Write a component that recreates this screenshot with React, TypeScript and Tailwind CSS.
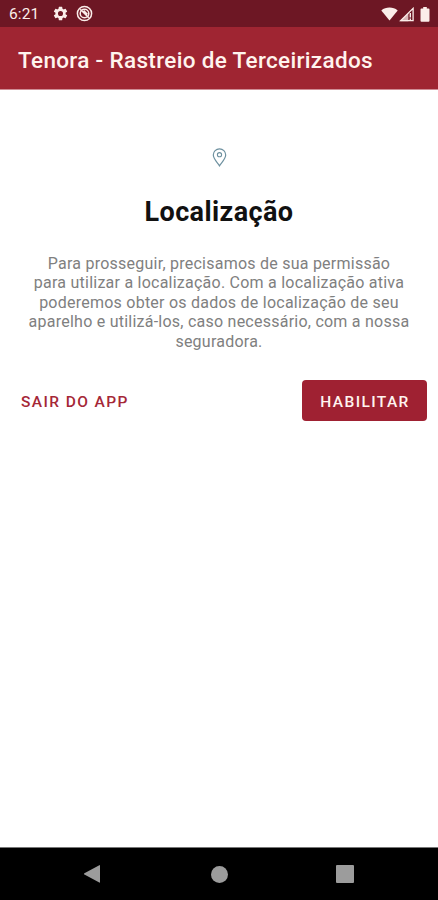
function StatusBar() {
  return (
    <div className="flex h-[27px] shrink-0 items-center bg-[#6d1724] pl-[9px] pr-[8px] text-[#fbeeea]">
      <span className="w-[43px] pt-[2px] text-[15.5px] leading-[27px] tracking-[0.1px]">6:21</span>
      <svg className="h-[17px] w-[17px]" viewBox="0 0 24 24" fill="currentColor">
        <path d="M19.14 12.94c.04-.3.06-.61.06-.94 0-.32-.02-.64-.07-.94l2.03-1.58a.49.49 0 0 0 .12-.61l-1.92-3.32a.49.49 0 0 0-.59-.22l-2.39.96a7 7 0 0 0-1.62-.94l-.36-2.54a.48.48 0 0 0-.48-.41h-3.84a.48.48 0 0 0-.47.41l-.36 2.54c-.59.24-1.13.57-1.62.94l-2.39-.96a.48.48 0 0 0-.59.22L2.74 8.87a.48.48 0 0 0 .12.61l2.03 1.58a6 6 0 0 0 0 1.88l-2.03 1.58a.49.49 0 0 0-.12.61l1.92 3.32c.12.22.37.29.59.22l2.39-.96c.5.38 1.03.7 1.62.94l.36 2.54c.05.24.24.41.48.41h3.84c.24 0 .44-.17.47-.41l.36-2.54a7 7 0 0 0 1.62-.94l2.39.96c.22.08.47 0 .59-.22l1.92-3.32a.48.48 0 0 0-.12-.61zM12 15.6a3.6 3.6 0 1 1 0-7.2 3.6 3.6 0 0 1 0 7.2z" />
      </svg>
      <svg className="ml-[7px] h-[17px] w-[17px]" viewBox="0 0 17 17" fill="none" stroke="currentColor">
        <circle cx="8.5" cy="8.5" r="7.1" strokeWidth="1.5" />
        <circle cx="8.5" cy="8.5" r="4.3" strokeWidth="1.5" />
        <path d="M4.2 4.2 12.8 12.8M7.6 5.6 11.4 9.4" strokeWidth="1.5" />
      </svg>
      <svg className="ml-auto h-[14px] w-[17px]" viewBox="0 0 17 14" fill="currentColor">
        <path d="M8.5 13.6.3 3.4C2.7 1.4 5.4.5 8.5.5s5.8.9 8.2 2.9z" />
      </svg>
      <svg className="ml-px mt-px h-[15px] w-[15px]" viewBox="0 0 15 15" fill="none" stroke="currentColor">
        <path d="M1.6 13.7 14.1 1.4V13.7z" strokeWidth="1.3" />
        <path d="M1.2 14.2 9.4 6V14.2z" fill="currentColor" stroke="none" opacity=".75" />
        <path d="M11.3 6v4.5M11.3 11.5v1.5" strokeWidth="1.4" />
      </svg>
      <svg className="ml-[6px] mt-px h-[15px] w-[10px]" viewBox="0 0 10 15" fill="currentColor">
        <path d="M3.2 0h3.6v1.5h1.7q1 0 1 1v11.3q0 1-1 1h-7q-1 0-1-1V2.5q0-1 1-1h1.7z" />
      </svg>
    </div>
  );
}

function NavigationBar() {
  return (
    <nav className="flex h-[53px] shrink-0 items-center justify-between border-t border-[#777] bg-black px-[84px] text-[#9c9c9c]">
      <svg className="h-[18px] w-[17px]" viewBox="0 0 17 18" fill="currentColor">
        <path d="M.4 8.3 15.3.2q.7-.3.7.5v16.4q0 .8-.7.4L.4 9.5q-1-.6 0-1.2z" />
      </svg>
      <span className="ml-[2px] h-[17px] w-[17px] rounded-full bg-[#9c9c9c]" />
      <span className="h-[18px] w-[18px] rounded-[1px] bg-[#9c9c9c]" />
    </nav>
  );
}

export default function App() {
  return (
    <div className="flex h-[900px] w-[438px] flex-col overflow-hidden bg-white font-['Roboto',sans-serif]">
      <StatusBar />
      <header className="flex h-[63px] shrink-0 items-center border-b border-[#cf8d95] bg-[#9f2532] pl-[18px] pt-[4px]">
        <h1 className="whitespace-nowrap text-[22.5px] font-medium leading-[28px] tracking-[0.33px] text-[#fff4ee]">
          Tenora - Rastreio de Terceirizados
        </h1>
      </header>
      <main className="flex flex-1 flex-col items-center pt-[58px]">
        <svg className="h-[19px] w-[15px]" viewBox="0 0 15 19" fill="none" stroke="#6d909f">
          <path d="M7.5 17.8C5.3 14.5 1.3 10.6 1.3 7a6.2 6.2 0 0 1 12.4 0c0 3.6-4 7.5-6.2 10.800z" strokeWidth="1.2" />
          <circle cx="7.5" cy="6.7" r="2.1" strokeWidth="1.1" />
        </svg>
        <h2 className="mt-[27px] text-[27px] font-bold leading-[36px] tracking-[0.4px] text-[#111]">Localização</h2>
        <p className="mt-[24px] whitespace-nowrap text-center text-[16px] leading-[19.4px] tracking-[0.24px] text-[#808080]">
          Para prosseguir, precisamos de sua permissão
          <br />
          para utilizar a localização. Com a localização ativa
          <br />
          poderemos obter os dados de localização de seu
          <br />
          aparelho e utilizá-los, caso necessário, com a nossa
          <br />
          seguradora.
        </p>
        <div className="mt-[29px] flex w-full items-center justify-between pl-[21px] pr-[11px]">
          <button className="pt-[2px] text-[15.5px] font-medium leading-[20px] tracking-[1.4px] text-[#a52737]">SAIR DO APP</button>
          <button className="h-[41px] w-[125px] rounded-[4px] bg-[#9f2132] pl-px pt-[2px] text-[15.5px] font-medium leading-[20px] tracking-[1.4px] text-[#fff4f0]">
            HABILITAR
          </button>
        </div>
      </main>
      <NavigationBar />
    </div>
  );
}
